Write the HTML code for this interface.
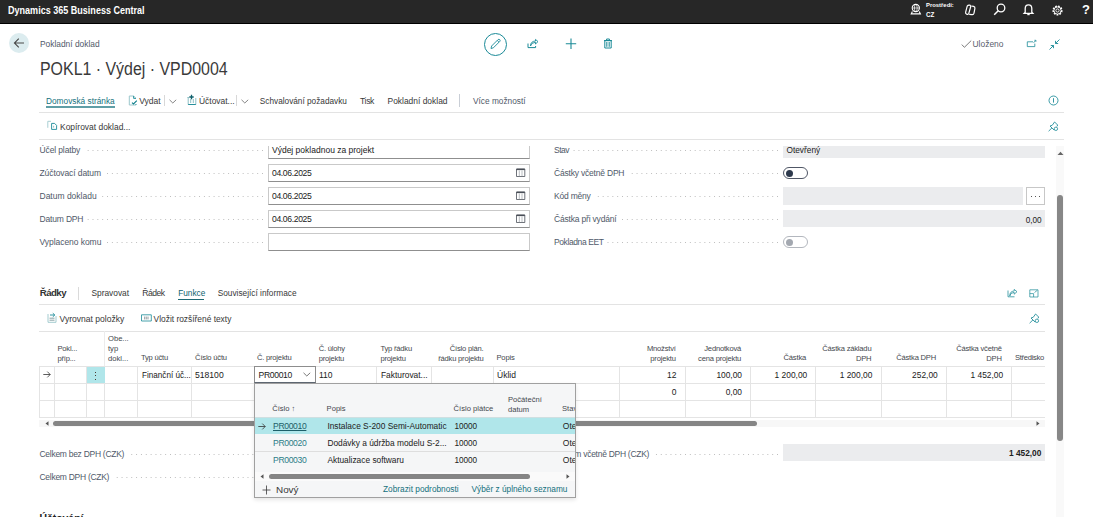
<!DOCTYPE html><html><head><meta charset="utf-8"><style>
html,body{margin:0;padding:0;width:1093px;height:517px;overflow:hidden;background:#fff}
body{position:relative;font-family:"Liberation Sans",sans-serif}
.t{position:absolute;white-space:nowrap;line-height:1}
.b{position:absolute;box-sizing:border-box}
svg.b{overflow:visible}
</style></head><body>
<div class="b" style="left:0.0px;top:0.0px;width:1093.0px;height:23.0px;background:#272727"></div>
<div class="b" style="left:0.0px;top:23.0px;width:1093.0px;height:1.0px;background:#000"></div>
<span class="t" style="left:8.0px;top:5.00px;font-size:10.6px;color:#fff;font-weight:bold;transform:scaleX(0.853);transform-origin:0 0;">Dynamics 365 Business Central</span>
<svg class="b" style="left:909px;top:2.3px" width="14" height="14" viewBox="0 0 14 14"><circle cx="6.8" cy="6" r="3.6" fill="none" stroke="#fff" stroke-width="1.1"/><ellipse cx="6.8" cy="6" rx="1.4" ry="3.5" fill="none" stroke="#fff" stroke-width="0.7"/><path d="M3.4 6 H10.2" stroke="#fff" stroke-width="0.7"/><path d="M3.4 9.4 L2.2 11.9 H11.4 L10.2 9.4" fill="none" stroke="#fff" stroke-width="1.1"/></svg>
<span class="t" style="left:926.0px;top:3.35px;font-size:5.9px;color:#fff;font-weight:bold;">Prostředí:</span>
<span class="t" style="left:926.0px;top:11.65px;font-size:6.3px;color:#fff;font-weight:bold;">CZ</span>
<svg class="b" style="left:964px;top:3.5px" width="13" height="12" viewBox="0 0 13 12"><path d="M3.2 2.2 Q4 1 5.5 1.2 L6.3 1.4 Q7 1.8 6.6 3 L4.8 9.4 Q4.4 10.6 3.2 10.3 L2.6 10.1 Q1.4 9.7 1.6 8.3 Z" fill="none" stroke="#fff" stroke-width="1.2"/><path d="M7.3 2 L9.6 2.4 Q11.2 2.8 10.9 4.4 L10 9.2 Q9.6 10.8 8 10.6 L5.2 10.3" fill="none" stroke="#fff" stroke-width="1.2"/></svg>
<svg class="b" style="left:993px;top:3.3px" width="13" height="13" viewBox="0 0 13 13"><circle cx="8" cy="5" r="3.8" fill="none" stroke="#fff" stroke-width="1.3"/><path d="M5.2 7.8 L1.2 11.8" stroke="#fff" stroke-width="1.5"/></svg>
<svg class="b" style="left:1023px;top:3px" width="11" height="13" viewBox="0 0 11 13"><path d="M2.2 9.3 V5.6 Q2.2 1.8 5.5 1.8 Q8.8 1.8 8.8 5.6 V9.3 L9.8 10.3 H1.2 Z" fill="none" stroke="#fff" stroke-width="1.3"/><path d="M4.3 11.6 H6.7" stroke="#fff" stroke-width="1.2"/></svg>
<svg class="b" style="left:1051px;top:3.5px" width="13" height="13" viewBox="0 0 13 13"><circle cx="6.5" cy="6.5" r="4.3" fill="none" stroke="#fff" stroke-width="1.6" stroke-dasharray="1.7 1.2"/><circle cx="6.5" cy="6.5" r="3.6" fill="none" stroke="#fff" stroke-width="0.9"/><circle cx="6.5" cy="6.5" r="1.6" fill="none" stroke="#fff" stroke-width="0.9"/></svg>
<span class="t" style="left:1082.0px;top:3.30px;font-size:13px;color:#fff;font-weight:bold;">?</span>
<div class="b" style="left:8.5px;top:32.5px;width:20.5px;height:20.5px;border-radius:50%;background:#dcecef"></div>
<svg class="b" style="left:13px;top:37px" width="12" height="12" viewBox="0 0 12 12"><path d="M11 6 H1.5 M5.8 1.6 L1.4 6 L5.8 10.4" fill="none" stroke="#4a4a4a" stroke-width="1.1"/></svg>
<span class="t" style="left:40.0px;top:40.10px;font-size:8.4px;color:#4f5969;font-weight:normal;">Pokladní doklad</span>
<div class="b" style="left:484px;top:32.5px;width:23px;height:23px;border-radius:50%;border:1px solid #1a8a97"></div>
<svg class="b" style="left:489px;top:38px" width="13" height="12" viewBox="0 0 13 12"><path d="M2 10.5 L2.6 8 L9 1.6 Q10 0.9 10.8 1.7 Q11.5 2.5 10.8 3.4 L4.4 9.8 Z M8.2 2.4 L10 4.2" fill="none" stroke="#1a8a97" stroke-width="0.9"/></svg>
<svg class="b" style="left:527px;top:39px" width="12" height="10" viewBox="0 0 12 10"><path d="M1 4.5 V8.6 H8.6 V7" fill="none" stroke="#1a8a97" stroke-width="1"/><path d="M3.5 7 Q4 3.5 8.5 3.3 V5 L11 2.6 L8.5 0.4 V2 Q3.5 2.3 3.5 7 Z" fill="none" stroke="#1a8a97" stroke-width="0.9"/></svg>
<svg class="b" style="left:565px;top:38px" width="12" height="12" viewBox="0 0 12 12"><path d="M6 0.5 V11 M0.8 5.8 H11.2" stroke="#1a8a97" stroke-width="1.1"/></svg>
<svg class="b" style="left:603px;top:38px" width="10" height="11" viewBox="0 0 10 11"><path d="M1.8 2.6 H8.2 V10 H1.8 Z M1 2.6 H9 M3.6 2.6 V1 H6.4 V2.6" fill="none" stroke="#1a8a97" stroke-width="1"/><path d="M3.5 4 V8.8 M5 4 V8.8 M6.5 4 V8.8" stroke="#1a8a97" stroke-width="0.7"/></svg>
<svg class="b" style="left:961px;top:40px" width="11" height="8" viewBox="0 0 11 8"><path d="M0.8 4.6 L3.4 7.3 L10.2 0.6" fill="none" stroke="#6a6a6a" stroke-width="0.9"/></svg>
<span class="t" style="left:972.5px;top:40.07px;font-size:8.45px;color:#5a606c;font-weight:normal;">Uloženo</span>
<svg class="b" style="left:1026px;top:39px" width="11" height="9" viewBox="0 0 11 9"><path d="M1.3 2.8 H7 M1.3 2.8 V7.6 H8.8 V4.6" fill="none" stroke="#1a8a97" stroke-width="0.8"/><path d="M7.6 3.8 L9.6 1.6 M8.4 1.3 H9.9 V2.8" fill="none" stroke="#1a8a97" stroke-width="0.8"/></svg>
<svg class="b" style="left:1049px;top:38.5px" width="11" height="11" viewBox="0 0 11 11"><path d="M10.5 0.5 L6.5 4.5 M6.5 1.8 V4.5 H9.2 M0.5 10.5 L4.5 6.5 M1.8 6.5 H4.5 V9.2" fill="none" stroke="#1a8a97" stroke-width="0.9"/></svg>
<span class="t" style="left:40.0px;top:60.50px;font-size:17.6px;color:#3a3a3a;font-weight:normal;transform:scaleX(0.905);transform-origin:0 0;">POKL1 · Výdej · VPD0004</span>
<span class="t" style="left:46.0px;top:97.15px;font-size:8.3px;color:#13707c;font-weight:normal;">Domovská stránka</span>
<div class="b" style="left:46.0px;top:106.0px;width:69.0px;height:2.0px;background:#5f9ea6"></div>
<svg class="b" style="left:128px;top:94.5px" width="10" height="11" viewBox="0 0 10 11"><path d="M1.3 1 H5.6 L8 3.4 M1.3 1 V10 H8" fill="none" stroke="#9cc7cc" stroke-width="1"/><path d="M5.6 1 V3.4 H8 M8 9 V10" fill="none" stroke="#1a8a97" stroke-width="0.9"/><path d="M4 7.6 L5.5 9 L8.8 5.6" fill="none" stroke="#0d7f8b" stroke-width="1.1"/></svg>
<span class="t" style="left:139.2px;top:97.05px;font-size:8.5px;color:#383838;font-weight:normal;">Vydat</span>
<div class="b" style="left:164.0px;top:95.0px;width:1.0px;height:11.0px;background:#d8d8d8"></div>
<svg class="b" style="left:169px;top:99px" width="8" height="5" viewBox="0 0 8 5"><path d="M0.5 0.8 L3.8 4 L7.2 0.8" fill="none" stroke="#666" stroke-width="0.8"/></svg>
<svg class="b" style="left:187px;top:94px" width="10" height="12" viewBox="0 0 10 12"><path d="M1.2 4 V10.5 H8.8 V4 M0.3 3.5 H2 M3.7 5 V9 M6.3 5 V9" fill="none" stroke="#8fc0c6" stroke-width="1"/><path d="M1.2 10.5 H8.8" stroke="#1a8a97" stroke-width="0.9"/><path d="M4.5 0.8 V5.2 M2.3 3 H6.7" stroke="#0d5f6b" stroke-width="1.3"/></svg>
<span class="t" style="left:199.0px;top:97.08px;font-size:8.45px;color:#383838;font-weight:normal;">Účtovat...</span>
<div class="b" style="left:236.0px;top:95.0px;width:1.0px;height:11.0px;background:#d8d8d8"></div>
<svg class="b" style="left:241px;top:99px" width="8" height="5" viewBox="0 0 8 5"><path d="M0.5 0.8 L3.8 4 L7.2 0.8" fill="none" stroke="#666" stroke-width="0.8"/></svg>
<span class="t" style="left:259.8px;top:97.67px;font-size:8.25px;color:#383838;font-weight:normal;">Schvalování požadavku</span>
<span class="t" style="left:360.0px;top:97.00px;font-size:8.6px;color:#383838;font-weight:normal;letter-spacing:-0.35px;">Tisk</span>
<span class="t" style="left:387.5px;top:97.08px;font-size:8.45px;color:#383838;font-weight:normal;">Pokladní doklad</span>
<div class="b" style="left:459.0px;top:94.0px;width:1.0px;height:13.0px;background:#c9ced6"></div>
<span class="t" style="left:473.0px;top:97.15px;font-size:8.3px;color:#4f5969;font-weight:normal;">Více možností</span>
<svg class="b" style="left:1048px;top:94.5px" width="11" height="11" viewBox="0 0 11 11"><circle cx="5.5" cy="5.5" r="4.5" fill="none" stroke="#1a8a97" stroke-width="0.85"/><path d="M5.5 3.2 V7.6" stroke="#1a8a97" stroke-width="0.9"/></svg>
<div class="b" style="left:39.0px;top:112.0px;width:1025.0px;height:1.0px;background:#e3e3e3"></div>
<svg class="b" style="left:47px;top:120px" width="11" height="11" viewBox="0 0 11 11"><path d="M0.8 1.3 H4 M0.8 1.3 V7.8" fill="none" stroke="#a9cfd3" stroke-width="1"/><path d="M4.6 3.4 H7.6 L9.6 5.4 V9.4 H4.6 Z" fill="none" stroke="#1a8a97" stroke-width="0.9"/><path d="M6.6 5.8 V7.6" stroke="#8ab8be" stroke-width="0.9"/></svg>
<span class="t" style="left:60.0px;top:123.08px;font-size:8.45px;color:#383838;font-weight:normal;">Kopírovat doklad...</span>
<svg class="b" style="left:1048px;top:120.5px" width="11" height="11" viewBox="0 0 11 11"><path d="M0.6 10.2 L4 6.8 M2 5 L4.2 4.3 L6.6 1 L10 4.4 L8.6 5.2 M2 5 L6.2 9.2" fill="none" stroke="#1a8a97" stroke-width="0.85"/><circle cx="7.9" cy="7.8" r="1.7" fill="#fff" stroke="#1a8a97" stroke-width="0.8"/></svg>
<div class="b" style="left:39.0px;top:139.0px;width:1025.0px;height:1.0px;background:#e3e3e3"></div>
<div class="b" style="left:51px;top:150px;width:212px;height:1px;background-image:linear-gradient(90deg,transparent 3.85px,#bdbdbd 3.85px);background-size:4.85px 1px;background-position:right 0"></div>
<span class="t" style="left:39.5px;top:146.05px;font-size:8.5px;color:#4f5969;letter-spacing:-0.12px;background:#fff;padding-right:3.8px">Účel platby</span>
<div class="b" style="left:51px;top:173px;width:212px;height:1px;background-image:linear-gradient(90deg,transparent 3.85px,#bdbdbd 3.85px);background-size:4.85px 1px;background-position:right 0"></div>
<span class="t" style="left:39.5px;top:169.05px;font-size:8.5px;color:#4f5969;letter-spacing:-0.09px;background:#fff;padding-right:3.8px">Zúčtovací datum</span>
<div class="b" style="left:51px;top:196px;width:212px;height:1px;background-image:linear-gradient(90deg,transparent 3.85px,#bdbdbd 3.85px);background-size:4.85px 1px;background-position:right 0"></div>
<span class="t" style="left:39.5px;top:192.05px;font-size:8.5px;color:#4f5969;letter-spacing:0px;background:#fff;padding-right:3.8px">Datum dokladu</span>
<div class="b" style="left:51px;top:219px;width:212px;height:1px;background-image:linear-gradient(90deg,transparent 3.85px,#bdbdbd 3.85px);background-size:4.85px 1px;background-position:right 0"></div>
<span class="t" style="left:39.5px;top:215.05px;font-size:8.5px;color:#4f5969;letter-spacing:-0.17px;background:#fff;padding-right:3.8px">Datum DPH</span>
<div class="b" style="left:51px;top:242px;width:212px;height:1px;background-image:linear-gradient(90deg,transparent 3.85px,#bdbdbd 3.85px);background-size:4.85px 1px;background-position:right 0"></div>
<span class="t" style="left:39.5px;top:238.05px;font-size:8.5px;color:#4f5969;letter-spacing:-0.05px;background:#fff;padding-right:3.8px">Vyplaceno komu</span>
<!--DOTS-L-->
<div class="b" style="left:268.0px;top:145.6px;width:262.0px;height:13.4px;background:#fff;border:1px solid #c9c9c9;border-bottom:1px solid #8f8f8f;border-top:none;"></div>
<span class="t" style="left:272.0px;top:146.05px;font-size:8.5px;color:#212121;font-weight:normal;">Výdej pokladnou za projekt</span>
<div class="b" style="left:268.0px;top:164.2px;width:262.0px;height:18.0px;background:#fff;border:1px solid #c9c9c9;border-bottom:1px solid #8f8f8f;"></div>
<span class="t" style="left:272.0px;top:169.00px;font-size:8.6px;color:#212121;font-weight:normal;letter-spacing:-0.36px;">04.06.2025</span>
<svg class="b" style="left:516px;top:168px" width="10" height="9" viewBox="0 0 10 9"><path d="M0.5 1 H8.8 V8.5 H0.5 Z" fill="none" stroke="#4a4f58" stroke-width="0.8"/><path d="M0.5 1.4 H8.8" stroke="#4a4f58" stroke-width="1.4"/><path d="M3.3 2.5 V8.5 M6 2.5 V8.5" stroke="#8a9099" stroke-width="0.6"/></svg>
<div class="b" style="left:268.0px;top:187.3px;width:262.0px;height:18.0px;background:#fff;border:1px solid #c9c9c9;border-bottom:1px solid #8f8f8f;"></div>
<span class="t" style="left:272.0px;top:192.00px;font-size:8.6px;color:#212121;font-weight:normal;letter-spacing:-0.36px;">04.06.2025</span>
<svg class="b" style="left:516px;top:191px" width="10" height="9" viewBox="0 0 10 9"><path d="M0.5 1 H8.8 V8.5 H0.5 Z" fill="none" stroke="#4a4f58" stroke-width="0.8"/><path d="M0.5 1.4 H8.8" stroke="#4a4f58" stroke-width="1.4"/><path d="M3.3 2.5 V8.5 M6 2.5 V8.5" stroke="#8a9099" stroke-width="0.6"/></svg>
<div class="b" style="left:268.0px;top:210.3px;width:262.0px;height:18.0px;background:#fff;border:1px solid #c9c9c9;border-bottom:1px solid #8f8f8f;"></div>
<span class="t" style="left:272.0px;top:215.00px;font-size:8.6px;color:#212121;font-weight:normal;letter-spacing:-0.36px;">04.06.2025</span>
<svg class="b" style="left:516px;top:214px" width="10" height="9" viewBox="0 0 10 9"><path d="M0.5 1 H8.8 V8.5 H0.5 Z" fill="none" stroke="#4a4f58" stroke-width="0.8"/><path d="M0.5 1.4 H8.8" stroke="#4a4f58" stroke-width="1.4"/><path d="M3.3 2.5 V8.5 M6 2.5 V8.5" stroke="#8a9099" stroke-width="0.6"/></svg>
<div class="b" style="left:268.0px;top:233.3px;width:262.0px;height:18.0px;background:#fff;border:1px solid #c9c9c9;border-bottom:1px solid #8f8f8f;"></div>
<div class="b" style="left:566px;top:150px;width:212px;height:1px;background-image:linear-gradient(90deg,transparent 3.85px,#bdbdbd 3.85px);background-size:4.85px 1px;background-position:right 0"></div>
<span class="t" style="left:554px;top:146.05px;font-size:8.5px;color:#4f5969;letter-spacing:-0.5px;background:#fff;padding-right:3.8px">Stav</span>
<div class="b" style="left:566px;top:173px;width:212px;height:1px;background-image:linear-gradient(90deg,transparent 3.85px,#bdbdbd 3.85px);background-size:4.85px 1px;background-position:right 0"></div>
<span class="t" style="left:554px;top:169.05px;font-size:8.5px;color:#4f5969;letter-spacing:-0.2px;background:#fff;padding-right:3.8px">Částky včetně DPH</span>
<div class="b" style="left:566px;top:196px;width:212px;height:1px;background-image:linear-gradient(90deg,transparent 3.85px,#bdbdbd 3.85px);background-size:4.85px 1px;background-position:right 0"></div>
<span class="t" style="left:554px;top:192.05px;font-size:8.5px;color:#4f5969;letter-spacing:-0.2px;background:#fff;padding-right:3.8px">Kód měny</span>
<div class="b" style="left:566px;top:219px;width:212px;height:1px;background-image:linear-gradient(90deg,transparent 3.85px,#bdbdbd 3.85px);background-size:4.85px 1px;background-position:right 0"></div>
<span class="t" style="left:554px;top:215.05px;font-size:8.5px;color:#4f5969;letter-spacing:-0.19px;background:#fff;padding-right:3.8px">Částka při vydání</span>
<div class="b" style="left:566px;top:242px;width:212px;height:1px;background-image:linear-gradient(90deg,transparent 3.85px,#bdbdbd 3.85px);background-size:4.85px 1px;background-position:right 0"></div>
<span class="t" style="left:554px;top:238.05px;font-size:8.5px;color:#4f5969;letter-spacing:-0.4px;background:#fff;padding-right:3.8px">Pokladna EET</span>
<!--DOTS-R-->
<div class="b" style="left:783.0px;top:145.6px;width:262.0px;height:12.6px;background:#ebecee"></div>
<span class="t" style="left:786.5px;top:146.15px;font-size:8.3px;color:#212121;font-weight:normal;">Otevřený</span>
<div class="b" style="left:783px;top:167px;width:25px;height:12px;border-radius:6px;border:1px solid #505766"></div>
<div class="b" style="left:785.8px;top:169.5px;width:7px;height:7px;border-radius:50%;background:#2e3a4d"></div>
<div class="b" style="left:783.0px;top:187.0px;width:240.0px;height:17.5px;background:#ebecee"></div>
<div class="b" style="left:1026.0px;top:187.0px;width:19.0px;height:17.5px;border:1px solid #c7c7c7;background:#fff"></div>
<div class="b" style="left:1030.8px;top:195.5px;width:1.2px;height:1.2px;background:#555"></div>
<div class="b" style="left:1035.0px;top:195.5px;width:1.2px;height:1.2px;background:#555"></div>
<div class="b" style="left:1039.2px;top:195.5px;width:1.2px;height:1.2px;background:#555"></div>
<div class="b" style="left:783.0px;top:210.0px;width:262.0px;height:17.0px;background:#ebecee"></div>
<span class="t" style="right:51.4px;top:216.70px;font-size:8.2px;color:#212121;font-weight:normal;">0,00</span>
<div class="b" style="left:783px;top:236px;width:25px;height:12px;border-radius:6px;border:1px solid #b3b7be"></div>
<div class="b" style="left:785.8px;top:238.5px;width:7px;height:7px;border-radius:50%;background:#a3a8b0"></div>
<div class="b" style="left:1055.7px;top:145.5px;width:8.7px;height:371.5px;background:#f9f9f9"></div>
<svg class="b" style="left:1057px;top:150.5px" width="7" height="5" viewBox="0 0 7 5"><path d="M0.5 4 L3.5 0.8 L6.5 4 Z" fill="#666"/></svg>
<div class="b" style="left:1057.4px;top:195.4px;width:5.5px;height:245.6px;background:#878787;border-radius:3px"></div>
<span class="t" style="left:39.7px;top:287.95px;font-size:9.7px;color:#333;font-weight:bold;letter-spacing:-0.55px;">Řádky</span>
<div class="b" style="left:78.0px;top:286.5px;width:1.0px;height:13.0px;background:#dadada"></div>
<span class="t" style="left:91.5px;top:289.12px;font-size:8.35px;color:#383838;font-weight:normal;">Spravovat</span>
<span class="t" style="left:142.3px;top:289.00px;font-size:8.6px;color:#383838;font-weight:normal;letter-spacing:-0.5px;">Řádek</span>
<span class="t" style="left:178.2px;top:289.68px;font-size:8.25px;color:#0f6470;font-weight:normal;">Funkce</span>
<div class="b" style="left:178.3px;top:298.8px;width:26.0px;height:1.5px;background:#1d6a74"></div>
<span class="t" style="left:217.7px;top:289.15px;font-size:8.3px;color:#383838;font-weight:normal;">Související informace</span>
<svg class="b" style="left:1006.5px;top:288.5px" width="11" height="9" viewBox="0 0 11 9"><path d="M1 1.5 V7.8 H7.5" fill="none" stroke="#1a8a97" stroke-width="0.75"/><path d="M2.8 7 Q3 3.6 7.2 3.4 V5.2 L10 2.7 L7.2 0.4 V2 Q2.6 2.3 2.8 7" fill="none" stroke="#1a8a97" stroke-width="0.75"/></svg>
<svg class="b" style="left:1029px;top:288.5px" width="10" height="9" viewBox="0 0 10 9"><path d="M0.8 0.8 H9 V8 H0.8 Z" fill="none" stroke="#1a8a97" stroke-width="0.7"/><path d="M0.8 4.6 H4.6 V8 M5.5 3.5 L8.3 1.3" fill="none" stroke="#1a8a97" stroke-width="0.7"/></svg>
<div class="b" style="left:39.0px;top:304.0px;width:1006.0px;height:1.0px;background:#e3e3e3"></div>
<svg class="b" style="left:47px;top:312px" width="10" height="11" viewBox="0 0 10 11"><path d="M1 2 V10.3 H9 V4" fill="none" stroke="#9ac6cb" stroke-width="0.9"/><path d="M2.5 6.2 H7.5 M2.5 8.2 H7.5" stroke="#6f8a90" stroke-width="0.8"/><path d="M3 3 H7.5 M5.8 1.2 L7.8 3 L5.8 4.8" fill="none" stroke="#1a8a97" stroke-width="0.9"/></svg>
<span class="t" style="left:59.5px;top:315.03px;font-size:8.55px;color:#383838;font-weight:normal;">Vyrovnat položky</span>
<svg class="b" style="left:140.5px;top:313.5px" width="11" height="8" viewBox="0 0 11 8"><path d="M0.5 0.8 H10.3 V7 H0.5 Z" fill="none" stroke="#1a8a97" stroke-width="0.8"/><path d="M3 3.2 H8 M3 4.8 H8" stroke="#5a6a70" stroke-width="0.8" stroke-dasharray="1.2 0.5"/></svg>
<span class="t" style="left:153.6px;top:315.10px;font-size:8.4px;color:#383838;font-weight:normal;">Vložit rozšířené texty</span>
<svg class="b" style="left:1028.5px;top:313px" width="11" height="11" viewBox="0 0 11 11"><path d="M0.6 10.2 L4 6.8 M2 5 L4.2 4.3 L6.6 1 L10 4.4 L8.6 5.2 M2 5 L6.2 9.2" fill="none" stroke="#1a8a97" stroke-width="0.85"/><circle cx="7.9" cy="7.8" r="1.7" fill="#fff" stroke="#1a8a97" stroke-width="0.8"/></svg>
<div class="b" style="left:39.0px;top:331.0px;width:1006.0px;height:1.0px;background:#e3e3e3"></div>
<div class="b" style="left:39.0px;top:366.0px;width:1006.0px;height:1.0px;background:#e4e4e4"></div>
<div class="b" style="left:39.0px;top:383.0px;width:1006.0px;height:1.0px;background:#e4e4e4"></div>
<div class="b" style="left:39.0px;top:400.0px;width:1006.0px;height:1.0px;background:#e4e4e4"></div>
<div class="b" style="left:39.0px;top:417.0px;width:1006.0px;height:1.0px;background:#e4e4e4"></div>
<div class="b" style="left:39.0px;top:366.0px;width:1.0px;height:51.0px;background:#e4e4e4"></div>
<div class="b" style="left:54.0px;top:366.0px;width:1.0px;height:51.0px;background:#e4e4e4"></div>
<div class="b" style="left:86.0px;top:366.0px;width:1.0px;height:51.0px;background:#e4e4e4"></div>
<div class="b" style="left:104.0px;top:366.0px;width:1.0px;height:51.0px;background:#e4e4e4"></div>
<div class="b" style="left:137.0px;top:366.0px;width:1.0px;height:51.0px;background:#e4e4e4"></div>
<div class="b" style="left:191.0px;top:366.0px;width:1.0px;height:51.0px;background:#e4e4e4"></div>
<div class="b" style="left:254.0px;top:366.0px;width:1.0px;height:51.0px;background:#e4e4e4"></div>
<div class="b" style="left:314.0px;top:366.0px;width:1.0px;height:51.0px;background:#e4e4e4"></div>
<div class="b" style="left:376.0px;top:366.0px;width:1.0px;height:51.0px;background:#e4e4e4"></div>
<div class="b" style="left:431.0px;top:366.0px;width:1.0px;height:51.0px;background:#e4e4e4"></div>
<div class="b" style="left:493.0px;top:366.0px;width:1.0px;height:51.0px;background:#e4e4e4"></div>
<div class="b" style="left:619.0px;top:366.0px;width:1.0px;height:51.0px;background:#e4e4e4"></div>
<div class="b" style="left:685.0px;top:366.0px;width:1.0px;height:51.0px;background:#e4e4e4"></div>
<div class="b" style="left:750.0px;top:366.0px;width:1.0px;height:51.0px;background:#e4e4e4"></div>
<div class="b" style="left:815.0px;top:366.0px;width:1.0px;height:51.0px;background:#e4e4e4"></div>
<div class="b" style="left:881.0px;top:366.0px;width:1.0px;height:51.0px;background:#e4e4e4"></div>
<div class="b" style="left:946.0px;top:366.0px;width:1.0px;height:51.0px;background:#e4e4e4"></div>
<div class="b" style="left:1011.0px;top:366.0px;width:1.0px;height:51.0px;background:#e4e4e4"></div>
<div class="b" style="left:104.0px;top:331.0px;width:1.0px;height:35.0px;background:#ececec"></div>
<span class="t" style="left:57.4px;top:345.00px;font-size:7.6px;color:#44474d;font-weight:normal;letter-spacing:-0.2px;">Pokl...</span>
<span class="t" style="left:57.4px;top:355.00px;font-size:7.6px;color:#44474d;font-weight:normal;letter-spacing:-0.2px;">příp...</span>
<span class="t" style="left:108.0px;top:335.00px;font-size:7.6px;color:#44474d;font-weight:normal;">Obe...</span>
<span class="t" style="left:108.0px;top:345.00px;font-size:7.6px;color:#44474d;font-weight:normal;">typ</span>
<span class="t" style="left:108.0px;top:355.00px;font-size:7.6px;color:#44474d;font-weight:normal;">dokl...</span>
<span class="t" style="left:140.9px;top:354.00px;font-size:7.6px;color:#44474d;font-weight:normal;letter-spacing:-0.2px;">Typ účtu</span>
<span class="t" style="left:195.1px;top:354.00px;font-size:7.6px;color:#44474d;font-weight:normal;letter-spacing:-0.2px;">Číslo účtu</span>
<span class="t" style="left:256.9px;top:354.00px;font-size:7.6px;color:#44474d;font-weight:normal;letter-spacing:-0.2px;">Č. projektu</span>
<span class="t" style="left:318.7px;top:345.00px;font-size:7.6px;color:#44474d;font-weight:normal;letter-spacing:-0.2px;">Č. úlohy</span>
<span class="t" style="left:318.7px;top:355.00px;font-size:7.6px;color:#44474d;font-weight:normal;letter-spacing:-0.2px;">projektu</span>
<span class="t" style="left:380.4px;top:345.00px;font-size:7.6px;color:#44474d;font-weight:normal;letter-spacing:-0.2px;">Typ řádku</span>
<span class="t" style="left:380.4px;top:355.00px;font-size:7.6px;color:#44474d;font-weight:normal;letter-spacing:-0.2px;">projektu</span>
<span class="t" style="right:609.5px;top:345.00px;font-size:7.6px;color:#44474d;font-weight:normal;letter-spacing:-0.2px;">Číslo plán.</span>
<span class="t" style="right:609.5px;top:355.00px;font-size:7.6px;color:#44474d;font-weight:normal;letter-spacing:-0.2px;">řádku projektu</span>
<span class="t" style="left:496.5px;top:354.00px;font-size:7.6px;color:#44474d;font-weight:normal;letter-spacing:-0.2px;">Popis</span>
<span class="t" style="right:417.3px;top:345.00px;font-size:7.6px;color:#44474d;font-weight:normal;letter-spacing:-0.2px;">Množství</span>
<span class="t" style="right:417.3px;top:355.00px;font-size:7.6px;color:#44474d;font-weight:normal;letter-spacing:-0.2px;">projektu</span>
<span class="t" style="right:351.9px;top:345.00px;font-size:7.6px;color:#44474d;font-weight:normal;letter-spacing:-0.2px;">Jednotková</span>
<span class="t" style="right:351.9px;top:355.00px;font-size:7.6px;color:#44474d;font-weight:normal;letter-spacing:-0.2px;">cena projektu</span>
<span class="t" style="right:287.0px;top:354.00px;font-size:7.6px;color:#44474d;font-weight:normal;letter-spacing:-0.2px;">Částka</span>
<span class="t" style="right:221.6px;top:345.00px;font-size:7.6px;color:#44474d;font-weight:normal;letter-spacing:-0.2px;">Částka základu</span>
<span class="t" style="right:221.6px;top:355.00px;font-size:7.6px;color:#44474d;font-weight:normal;letter-spacing:-0.2px;">DPH</span>
<span class="t" style="right:157.0px;top:354.00px;font-size:7.6px;color:#44474d;font-weight:normal;letter-spacing:-0.2px;">Částka DPH</span>
<span class="t" style="right:91.3px;top:345.00px;font-size:7.6px;color:#44474d;font-weight:normal;letter-spacing:-0.2px;">Částka včetně</span>
<span class="t" style="right:91.3px;top:355.00px;font-size:7.6px;color:#44474d;font-weight:normal;letter-spacing:-0.2px;">DPH</span>
<div class="b" style="left:1012px;top:350px;width:33px;height:12px;overflow:hidden"><span class="t" style="left:3px;top:3.55px;font-size:7.6px;color:#44474d;letter-spacing:-0.3px">Středisko</span></div>
<svg class="b" style="left:42.8px;top:370.8px" width="8" height="7" viewBox="0 0 8 7"><path d="M0.3 3.5 H7.2 M4.3 0.6 L7.2 3.5 L4.3 6.4" fill="none" stroke="#333" stroke-width="0.8"/></svg>
<div class="b" style="left:87.0px;top:367.0px;width:17.5px;height:16.0px;background:#b0e6ea"></div>
<div class="b" style="left:95.0px;top:371.5px;width:1.2px;height:1.2px;background:#4a3a30"></div>
<div class="b" style="left:95.0px;top:375.0px;width:1.2px;height:1.2px;background:#4a3a30"></div>
<div class="b" style="left:95.0px;top:378.8px;width:1.2px;height:1.2px;background:#4a3a30"></div>
<span class="t" style="left:142.0px;top:371.73px;font-size:8.15px;color:#212121;font-weight:normal;">Finanční úč...</span>
<span class="t" style="left:195.0px;top:371.00px;font-size:8.6px;color:#212121;font-weight:normal;">518100</span>
<div class="b" style="left:254.0px;top:366.0px;width:62.0px;height:17.0px;background:#fff;border:1px solid #8d8d8d;border-bottom:1px solid #5f6873"></div>
<span class="t" style="left:258.6px;top:371.00px;font-size:8.6px;color:#212121;font-weight:normal;letter-spacing:-0.35px;">PR00010</span>
<svg class="b" style="left:302.5px;top:372px" width="8" height="5" viewBox="0 0 8 5"><path d="M0.5 0.8 L3.8 4 L7.2 0.8" fill="none" stroke="#555" stroke-width="0.8"/></svg>
<span class="t" style="left:319.0px;top:371.05px;font-size:8.5px;color:#212121;font-weight:normal;">110</span>
<span class="t" style="left:381.0px;top:371.10px;font-size:8.4px;color:#212121;font-weight:normal;">Fakturovat...</span>
<span class="t" style="left:497.0px;top:371.05px;font-size:8.5px;color:#212121;font-weight:normal;">Úklid</span>
<span class="t" style="right:416.6px;top:371.05px;font-size:8.5px;color:#212121;font-weight:normal;">12</span>
<span class="t" style="right:351.0px;top:371.10px;font-size:8.4px;color:#212121;font-weight:normal;">100,00</span>
<span class="t" style="right:285.8px;top:371.10px;font-size:8.4px;color:#212121;font-weight:normal;">1 200,00</span>
<span class="t" style="right:220.7px;top:371.10px;font-size:8.4px;color:#212121;font-weight:normal;">1 200,00</span>
<span class="t" style="right:155.3px;top:371.10px;font-size:8.4px;color:#212121;font-weight:normal;">252,00</span>
<span class="t" style="right:89.9px;top:371.10px;font-size:8.4px;color:#212121;font-weight:normal;">1 452,00</span>
<span class="t" style="right:416.6px;top:388.05px;font-size:8.5px;color:#212121;font-weight:normal;">0</span>
<span class="t" style="right:351.0px;top:388.10px;font-size:8.4px;color:#212121;font-weight:normal;">0,00</span>
<div class="b" style="left:39.0px;top:420.0px;width:1006.0px;height:7.0px;background:#f7f7f7"></div>
<svg class="b" style="left:44.5px;top:421px" width="4" height="5" viewBox="0 0 4 5"><path d="M3.5 0.3 L0.5 2.5 L3.5 4.7 Z" fill="#555"/></svg>
<div class="b" style="left:53.0px;top:421.0px;width:703.5px;height:5.0px;background:#858585;border-radius:2.5px"></div>
<svg class="b" style="left:1036px;top:421px" width="4" height="5" viewBox="0 0 4 5"><path d="M0.5 0.3 L3.5 2.5 L0.5 4.7 Z" fill="#555"/></svg>
<div class="b" style="left:51px;top:454px;width:212px;height:1px;background-image:linear-gradient(90deg,transparent 3.85px,#bdbdbd 3.85px);background-size:4.85px 1px;background-position:right 0"></div>
<span class="t" style="left:39.5px;top:450.05px;font-size:8.5px;color:#4f5969;letter-spacing:-0.28px;background:#fff;padding-right:3.8px">Celkem bez DPH (CZK)</span>
<div class="b" style="left:51px;top:477px;width:212px;height:1px;background-image:linear-gradient(90deg,transparent 3.85px,#bdbdbd 3.85px);background-size:4.85px 1px;background-position:right 0"></div>
<span class="t" style="left:39.5px;top:473.05px;font-size:8.5px;color:#4f5969;letter-spacing:-0.28px;background:#fff;padding-right:3.8px">Celkem DPH (CZK)</span>
<div class="b" style="left:566px;top:454px;width:212px;height:1px;background-image:linear-gradient(90deg,transparent 3.85px,#bdbdbd 3.85px);background-size:4.85px 1px;background-position:right 0"></div>
<span class="t" style="left:554px;top:450.05px;font-size:8.5px;color:#4f5969;letter-spacing:-0.28px;background:#fff;padding-right:3.8px">Celkem včetně DPH (CZK)</span>
<div class="b" style="left:783.0px;top:443.6px;width:262.0px;height:17.7px;background:#ebecee"></div>
<span class="t" style="right:51.7px;top:449.15px;font-size:8.3px;color:#212121;font-weight:bold;">1 452,00</span>
<span class="t" style="left:39.5px;top:513.60px;font-size:10.4px;color:#222;font-weight:bold;">Účtování</span>
<div class="b" style="left:254px;top:383px;width:321.5px;height:115px;background:#f5f6f7;border:1px solid #a0a0a0;box-shadow:0 2px 4px rgba(0,0,0,0.10)"></div>
<span class="t" style="left:272.2px;top:405.00px;font-size:7.6px;color:#44474d;font-weight:normal;">Číslo ↑</span>
<span class="t" style="left:326.6px;top:405.00px;font-size:7.6px;color:#44474d;font-weight:normal;">Popis</span>
<span class="t" style="left:453.6px;top:405.00px;font-size:7.6px;color:#44474d;font-weight:normal;">Číslo plátce</span>
<span class="t" style="left:508.0px;top:396.00px;font-size:7.6px;color:#44474d;font-weight:normal;">Počáteční</span>
<span class="t" style="left:508.0px;top:406.00px;font-size:7.6px;color:#44474d;font-weight:normal;">datum</span>
<div class="b" style="left:560px;top:400px;width:15px;height:12px;overflow:hidden"><span class="t" style="left:2px;top:4.6px;font-size:7.6px;color:#44474d">Stav</span></div>
<div class="b" style="left:255.0px;top:417.0px;width:320.0px;height:17.4px;background:#b0e6ea"></div>
<div class="b" style="left:255.0px;top:417.0px;width:320.0px;height:1.0px;background:#cfdfe1"></div>
<div class="b" style="left:255.0px;top:451.0px;width:320.0px;height:1.0px;background:#dedede"></div>
<svg class="b" style="left:258px;top:423.3px" width="8" height="7" viewBox="0 0 8 7"><path d="M0.3 3.5 H7.2 M4.3 0.6 L7.2 3.5 L4.3 6.4" fill="none" stroke="#333" stroke-width="0.8"/></svg>
<span class="t" style="left:273.0px;top:422.00px;font-size:8.6px;color:#1d5f69;font-weight:normal;text-decoration:underline;letter-spacing:-0.35px;">PR00010</span>
<span class="t" style="left:327.4px;top:422.12px;font-size:8.35px;color:#212121;font-weight:normal;">Instalace S-200 Semi-Automatic</span>
<span class="t" style="left:454.4px;top:422.70px;font-size:8.2px;color:#212121;font-weight:normal;">10000</span>
<div class="b" style="left:560px;top:419.9px;width:15px;height:12px;overflow:hidden"><span class="t" style="left:2.8px;top:1.92px;font-size:8.5px;color:#212121">Otevřený</span></div>
<span class="t" style="left:273.0px;top:439.00px;font-size:8.6px;color:#2a7c87;font-weight:normal;letter-spacing:-0.35px;">PR00020</span>
<span class="t" style="left:327.4px;top:439.12px;font-size:8.35px;color:#212121;font-weight:normal;">Dodávky a údržba modelu S-2...</span>
<span class="t" style="left:454.4px;top:439.70px;font-size:8.2px;color:#212121;font-weight:normal;">10000</span>
<div class="b" style="left:560px;top:436.8px;width:15px;height:12px;overflow:hidden"><span class="t" style="left:2.8px;top:1.92px;font-size:8.5px;color:#212121">Otevřený</span></div>
<span class="t" style="left:273.0px;top:456.00px;font-size:8.6px;color:#2a7c87;font-weight:normal;letter-spacing:-0.35px;">PR00030</span>
<span class="t" style="left:327.4px;top:456.12px;font-size:8.35px;color:#212121;font-weight:normal;">Aktualizace softwaru</span>
<span class="t" style="left:454.4px;top:456.70px;font-size:8.2px;color:#212121;font-weight:normal;">10000</span>
<div class="b" style="left:560px;top:453.7px;width:15px;height:12px;overflow:hidden"><span class="t" style="left:2.8px;top:1.92px;font-size:8.5px;color:#212121">Otevřený</span></div>
<div class="b" style="left:255.0px;top:471.5px;width:320.0px;height:9.5px;background:#fafafa"></div>
<svg class="b" style="left:259.5px;top:474px" width="4" height="5" viewBox="0 0 4 5"><path d="M3.5 0.3 L0.5 2.5 L3.5 4.7 Z" fill="#555"/></svg>
<div class="b" style="left:269.0px;top:473.8px;width:260.5px;height:5.0px;background:#858585;border-radius:2.5px"></div>
<svg class="b" style="left:566px;top:474px" width="4" height="5" viewBox="0 0 4 5"><path d="M0.5 0.3 L3.5 2.5 L0.5 4.7 Z" fill="#555"/></svg>
<svg class="b" style="left:262px;top:484.5px" width="10" height="10" viewBox="0 0 10 10"><path d="M4.5 0.5 V9.5 M0.5 5 H8.5" stroke="#3a3a3a" stroke-width="0.8"/></svg>
<span class="t" style="left:276.0px;top:484.85px;font-size:9.9px;color:#383838;font-weight:normal;">Nový</span>
<span class="t" style="left:383.0px;top:485.15px;font-size:8.3px;color:#13707c;font-weight:normal;">Zobrazit podrobnosti</span>
<span class="t" style="left:471.5px;top:485.15px;font-size:8.3px;color:#13707c;font-weight:normal;">Výběr z úplného seznamu</span>
</body></html>
